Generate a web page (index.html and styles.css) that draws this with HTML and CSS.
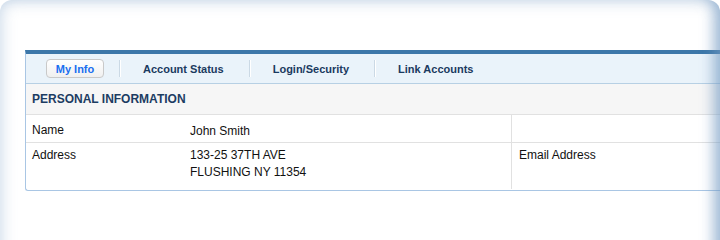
FILE: index.html
```html
<!DOCTYPE html>
<html>
<head>
<meta charset="utf-8">
<link rel="stylesheet" href="styles.css">
</head>
<body>
<div class="page">
  <div class="panel">
    <div class="tabs">
      <span class="tab-btn">My Info</span>
      <span class="sep"></span>
      <span class="tab">Account Status</span>
      <span class="sep"></span>
      <span class="tab">Login/Security</span>
      <span class="sep"></span>
      <span class="tab">Link Accounts</span>
    </div>
    <div class="section-head">PERSONAL INFORMATION</div>
    <div class="info">
      <div class="row row-name">
        <div class="label">Name</div>
        <div class="value">John Smith</div>
        <div class="extra"></div>
      </div>
      <div class="row row-addr">
        <div class="label">Address</div>
        <div class="value">133-25 37TH AVE<br>FLUSHING NY 11354</div>
        <div class="extra">Email Address</div>
      </div>
    </div>
  </div>
</div>
</body>
</html>
```

FILE: styles.css
```css
html, body {
  margin: 0;
  padding: 0;
  background: #ffffff;
}
body {
  font-family: "Liberation Sans", Arial, sans-serif;
  font-size: 12px;
  color: #111;
}
.page {
  position: relative;
  width: 720px;
  height: 240px;
  overflow: hidden;
  box-sizing: border-box;
  padding: 50px 0 0 25px;
}
.page::after {
  content: "";
  position: absolute;
  left: 0;
  top: 0;
  right: 0;
  bottom: -60px;
  border-radius: 12px;
  pointer-events: none;
  box-shadow:
    inset 0 0 16px rgba(120, 158, 198, 0.45),
    inset -14px 0 14px -8px rgba(110, 150, 192, 0.55);
}
.panel {
  border-top: 4px solid #3c77a9;
  border-left: 1px solid #a9c6e4;
  border-bottom: 1px solid #a9c6e4;
  border-bottom-left-radius: 3px;
  padding-bottom: 1px;
}
.tabs {
  display: flex;
  align-items: center;
  height: 29px;
  background: #eaf3fa;
  border-bottom: 1px solid #b7d0e4;
}
.tab-btn {
  margin-left: 20px;
  width: 58px;
  height: 19px;
  box-sizing: border-box;
  display: flex;
  align-items: center;
  justify-content: center;
  background: linear-gradient(#ffffff, #f0f0f0);
  border: 1px solid #c9c9c9;
  border-radius: 4px;
  color: #1a6ff0;
  font-weight: bold;
  font-size: 11px;
  margin-right: 15px;
}
.sep {
  width: 1px;
  height: 17px;
  background: #cbd9e5;
  box-shadow: 1px 0 0 #ffffff;
}
.tab {
  padding: 0 25px 0 23px;
  font-weight: bold;
  font-size: 11px;
  color: #1a3a5f;
}
.section-head {
  height: 31px;
  box-sizing: border-box;
  border-bottom: 1px solid #e1e1e1;
  background: #f6f6f6;
  padding: 8px 0 0 6px;
  font-weight: bold;
  font-size: 12px;
  color: #1c3c62;
}
.row {
  display: grid;
  grid-template-columns: 158px 327px 1fr;
}
.row-name {
  height: 28px;
  box-sizing: border-box;
  border-bottom: 1px solid #e1e1e1;
}
.row-addr {
  height: 46px;
}
.label {
  padding-left: 6px;
}
.value {
  padding-left: 6px;
  line-height: 17px;
}
.extra {
  border-left: 1px solid #e1e1e1;
  padding-left: 7px;
}
.row-name .label, .row-name .value {
  padding-top: 7px;
  line-height: 17px;
}
.row-name .value {
  padding-top: 8px;
}
.row-addr .label, .row-addr .value, .row-addr .extra {
  padding-top: 4px;
  line-height: 17px;
}
```
